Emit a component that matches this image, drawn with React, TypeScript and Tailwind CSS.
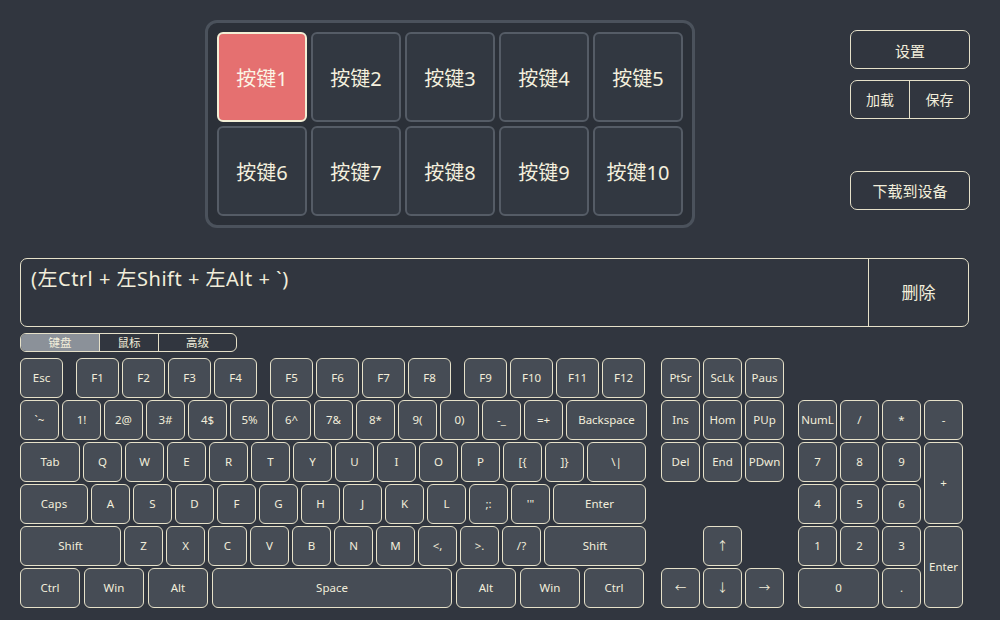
import React from "react";

type KeyDef = { label: string; w: number; ml?: number };

const keyBase =
  "h-[40px] shrink-0 flex items-center justify-center rounded-[6px] border-[1.5px] border-[#e6e1c9] bg-[#464c55] text-[11.5px] text-[#f2eedb]";

const Key: React.FC<{ k: KeyDef }> = ({ k }) => (
  <div className={keyBase} style={{ width: k.w, marginLeft: k.ml ?? 0 }}>
    {k.label}
  </div>
);

const fnRow: KeyDef[] = [
  { label: "Esc", w: 43 },
  { label: "F1", w: 43, ml: 13 },
  { label: "F2", w: 43, ml: 3 },
  { label: "F3", w: 43, ml: 3 },
  { label: "F4", w: 43, ml: 3 },
  { label: "F5", w: 43, ml: 13 },
  { label: "F6", w: 43, ml: 3 },
  { label: "F7", w: 43, ml: 3 },
  { label: "F8", w: 43, ml: 3 },
  { label: "F9", w: 43, ml: 13 },
  { label: "F10", w: 43, ml: 3 },
  { label: "F11", w: 43, ml: 3 },
  { label: "F12", w: 43, ml: 3 },
];

const row = (labels: string[], first: number, last: number, gap = 3): KeyDef[] =>
  labels.map((label, i) => ({
    label,
    w: i === 0 ? first : i === labels.length - 1 ? last : 39,
    ml: i === 0 ? 0 : gap,
  }));

const mainRows: KeyDef[][] = [
  fnRow,
  row(["`~", "1!", "2@", "3#", "4$", "5%", "6^", "7&", "8*", "9(", "0)", "-_", "=+", "Backspace"], 39, 81),
  row(["Tab", "Q", "W", "E", "R", "T", "Y", "U", "I", "O", "P", "[{", "]}", "\\|"], 60, 59),
  row(["Caps", "A", "S", "D", "F", "G", "H", "J", "K", "L", ";:", "'\"", "Enter"], 68, 93),
  row(["Shift", "Z", "X", "C", "V", "B", "N", "M", "<,", ">.", "/?", "Shift"], 101, 102),
  [
    { label: "Ctrl", w: 60 },
    { label: "Win", w: 60, ml: 4 },
    { label: "Alt", w: 60, ml: 4 },
    { label: "Space", w: 240, ml: 4 },
    { label: "Alt", w: 60, ml: 4 },
    { label: "Win", w: 60, ml: 4 },
    { label: "Ctrl", w: 60, ml: 4 },
  ],
];

const navRows: (string | null)[][] = [
  ["PtSr", "ScLk", "Paus"],
  ["Ins", "Hom", "PUp"],
  ["Del", "End", "PDwn"],
  [null, null, null],
  [null, "↑", null],
  ["←", "↓", "→"],
];

const App: React.FC = () => {
  const macroKeys = Array.from({ length: 10 }, (_, i) => `按键${i + 1}`);

  return (
    <div
      className="w-[1000px] h-[620px] bg-[#31363f] text-[#f2eedb] overflow-hidden"
      style={{ fontFamily: '"Noto Sans", "Noto Sans CJK SC", sans-serif' }}
    >
      {/* top: macro keys + side buttons */}
      <div className="flex pt-[20px]">
        <div className="ml-[205px] w-[490px] h-[208px] rounded-[12px] border-[3px] border-[#4b525c] bg-[#2b3038] p-[9px] grid grid-cols-5 gap-[4px]">
          {macroKeys.map((name, i) => (
            <div
              key={name}
              className={
                i === 0
                  ? "h-[90px] pt-[3px] flex items-center justify-center rounded-[6px] border-2 border-[#f3efd6] bg-[#e57070] text-[20px] text-[#fbf5e6]"
                  : "h-[90px] pt-[3px] flex items-center justify-center rounded-[6px] border-2 border-[#555c66] bg-[#323841] text-[20px] text-[#f4f0de]"
              }
            >
              {name}
            </div>
          ))}
        </div>

        <div className="ml-auto mr-[30px] pt-[10px] w-[120px] flex flex-col">
          <div className="h-[39px] pt-[3px] flex items-center justify-center rounded-[7px] border border-[#e6e1c9] text-[15px]">
            设置
          </div>
          <div className="mt-[11px] h-[39px] flex rounded-[7px] border border-[#e6e1c9] text-[14px]">
            <div className="w-[59px] flex items-center justify-center border-r border-[#e6e1c9]">加载</div>
            <div className="flex-1 flex items-center justify-center">保存</div>
          </div>
          <div className="mt-[52px] h-[39px] pt-[2px] flex items-center justify-center rounded-[7px] border border-[#e6e1c9] text-[15px]">
            下载到设备
          </div>
        </div>
      </div>

      {/* combo display */}
      <div className="mt-[30px] ml-[20px] w-[949px] h-[69px] flex rounded-[7px] border border-[#e6e1c9]">
        <div className="flex-1 pl-[10px] pt-[6px] text-[20px] leading-[28px] tracking-[0.5px]">
          (左Ctrl + 左Shift + 左Alt + `)
        </div>
        <div className="w-[100px] flex items-center justify-center border-l border-[#e6e1c9] text-[17px]">
          删除
        </div>
      </div>

      {/* tabs */}
      <div className="mt-[6px] ml-[20px] w-[217px] h-[19px] flex rounded-[6px] border border-[#e6e1c9] overflow-hidden text-[11.5px] leading-none">
        <div className="w-[79px] flex items-center justify-center bg-[#8b9199] border-r border-[#e6e1c9]">键盘</div>
        <div className="w-[59px] flex items-center justify-center border-r border-[#e6e1c9]">鼠标</div>
        <div className="flex-1 flex items-center justify-center">高级</div>
      </div>

      {/* keyboard */}
      <div className="mt-[6px] ml-[20px] flex">
        <div className="flex flex-col gap-[2px]">
          {mainRows.map((r, ri) => (
            <div key={ri} className="flex">
              {r.map((k, ki) => (
                <Key key={ki} k={k} />
              ))}
            </div>
          ))}
        </div>

        <div className="ml-[14px] flex flex-col gap-[2px]">
          {navRows.map((r, ri) => (
            <div key={ri} className="flex gap-[3px] h-[40px]">
              {r.map((label, ki) =>
                label ? (
                  <div key={ki} className={`${keyBase} w-[39px]`}>
                    {label}
                  </div>
                ) : (
                  <div key={ki} className="w-[39px] h-[40px]" />
                )
              )}
            </div>
          ))}
        </div>

        <div className="ml-[14px] mt-[42px] grid grid-cols-[repeat(4,39px)] grid-rows-[repeat(5,40px)] gap-x-[3px] gap-y-[2px]">
          {["NumL", "/", "*", "-"].map((l) => (
            <div key={l} className={keyBase}>{l}</div>
          ))}
          <div className={keyBase}>7</div>
          <div className={keyBase}>8</div>
          <div className={keyBase}>9</div>
          <div className={`${keyBase} row-span-2 h-auto`}>+</div>
          <div className={keyBase}>4</div>
          <div className={keyBase}>5</div>
          <div className={keyBase}>6</div>
          <div className={keyBase}>1</div>
          <div className={keyBase}>2</div>
          <div className={keyBase}>3</div>
          <div className={`${keyBase} row-span-2 h-auto`}>Enter</div>
          <div className={`${keyBase} col-span-2`}>0</div>
          <div className={keyBase}>.</div>
        </div>
      </div>
    </div>
  );
};

export default App;
